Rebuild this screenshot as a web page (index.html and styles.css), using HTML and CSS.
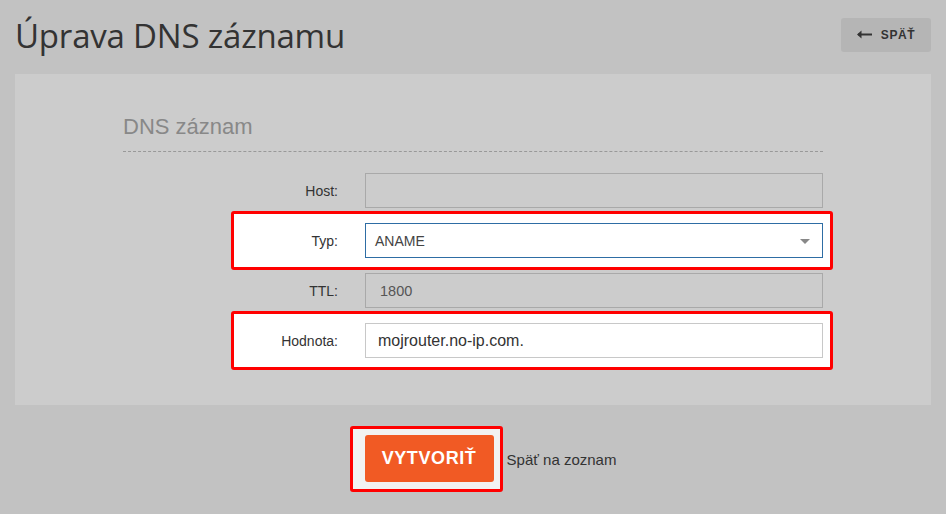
FILE: index.html
```html
<!DOCTYPE html>
<html lang="sk">
<head>
    <meta charset="UTF-8" />
    <meta name="viewport" content="width=device-width, initial-scale=1.0" />
    <title>Úprava DNS záznamu</title>
    <link rel="stylesheet" href="styles.css">
</head>
<body>
    <div class="page-header">
        <h1>Úprava DNS záznamu</h1>
        <a class="back-button" href="#">
            <svg class="arrow" width="15" height="9" viewBox="0 0 15 9" aria-hidden="true">
                <path d="M1 4.5 H15" stroke="#333" stroke-width="2" fill="none" />
                <path d="M0 4.5 L4.5 0.5 V8.5 Z" fill="#333" />
            </svg>
            SPÄŤ
        </a>
    </div>

    <div class="panel">
        <form class="record-form">
            <h2 class="legend">DNS záznam</h2>

            <div class="form-row">
                <label for="host">Host:</label>
                <input type="text" id="host" class="field disabled" value="" disabled />
            </div>

            <div class="form-row highlight">
                <label for="typ">Typ:</label>
                <div class="select-wrapper">
                    <div class="field select" id="typ">ANAME</div>
                    <span class="caret"></span>
                </div>
            </div>

            <div class="form-row">
                <label for="ttl">TTL:</label>
                <input type="text" id="ttl" class="field disabled ttl" value="1800" disabled />
            </div>

            <div class="form-row highlight">
                <label for="hodnota">Hodnota:</label>
                <input type="text" id="hodnota" class="field value" value="mojrouter.no-ip.com." />
            </div>
        </form>
    </div>

    <div class="actions">
        <div class="submit-box">
            <button class="submit-button">VYTVORIŤ</button>
        </div>
        <a class="back-link" href="#">Späť na zoznam</a>
    </div>
</body>
</html>
```

FILE: styles.css
```css
:root {
    --page-background: #c2c2c2;
    --panel-background: #cccccc;
    --text-color: #333333;
    --muted-color: #888888;
    --field-border: #a9a9a9;
    --focus-border: #2e6da4;
    --highlight: #ff0000;
    --accent: #f15a24;
}

body {
    margin: 0;
    background-color: var(--page-background);
    color: var(--text-color);
    font-family: "Liberation Sans", Arial, sans-serif;
    font-size: 14px;
}

.page-header {
    display: flex;
    justify-content: space-between;
    align-items: flex-start;
    padding: 0 15px;
    height: 74px;
}

h1 {
    margin: 13px 0 0 0;
    font-family: "Open Sans", sans-serif;
    font-weight: 400;
    font-size: 33px;
    line-height: 46px;
    color: #333333;
    letter-spacing: -0.2px;
}

.back-button {
    margin-top: 18px;
    width: 90px;
    height: 34px;
    display: flex;
    align-items: center;
    justify-content: center;
    gap: 9px;
    background-color: #b5b5b5;
    border-radius: 3px;
    color: #333333;
    text-decoration: none;
    font-weight: 700;
    font-size: 12px;
    letter-spacing: 0.6px;
}

.back-button .arrow {
    margin-top: -1px;
}

.panel {
    margin: 0 15px;
    background-color: var(--panel-background);
    padding: 38px 0 44px 0;
}

.record-form {
    width: 700px;
    margin-left: 108px;
}

.legend {
    margin: 0 0 9px 0;
    padding-bottom: 9px;
    font-size: 22px;
    font-weight: 400;
    line-height: 30px;
    color: var(--muted-color);
    border-bottom: 1px dashed #999999;
}

.form-row {
    display: flex;
    align-items: center;
    margin: 0 -10px -9px 108px;
    padding: 9px 7px 9px 0;
    border: 3px solid transparent;
    border-radius: 3px;
}

.form-row.highlight {
    border-color: var(--highlight);
    background-color: #ffffff;
    position: relative;
}

.form-row label {
    width: 104px;
    margin-right: 27px;
    text-align: right;
    color: #333333;
}

.field {
    box-sizing: border-box;
    width: 458px;
    height: 35px;
    margin: 0;
    padding: 6px 12px;
    border: 1px solid #c8c8c8;
    background-color: #ffffff;
    font-family: "Liberation Sans", Arial, sans-serif;
    font-size: 14px;
    color: #333333;
    outline: none;
}

.field.disabled {
    background-color: var(--panel-background);
    border-color: var(--field-border);
    color: #555555;
}

.field.ttl {
    padding-left: 14px;
    font-size: 14.5px;
}

.field.value {
    font-size: 16px;
}

.select-wrapper {
    position: relative;
}

.field.select {
    display: flex;
    align-items: center;
    padding-left: 9px;
    border-color: var(--focus-border);
    color: #444444;
}

.caret {
    position: absolute;
    right: 13px;
    top: 16px;
    width: 0;
    height: 0;
    border-left: 5px solid transparent;
    border-right: 5px solid transparent;
    border-top: 5px solid #888888;
}

.actions {
    display: flex;
    align-items: center;
    justify-content: center;
    margin-top: 21px;
    padding-left: 20px;
    gap: 4px;
}

.submit-box {
    padding: 6px 6px 7px 12px;
    border: 3px solid var(--highlight);
    border-radius: 3px;
    background-color: #f2f2f2;
}

.submit-button {
    display: block;
    width: 129px;
    height: 47px;
    background-color: var(--accent);
    color: #ffffff;
    border: none;
    border-radius: 3px;
    font-family: "Liberation Sans", Arial, sans-serif;
    font-size: 18px;
    font-weight: 700;
    letter-spacing: 0.6px;
    cursor: pointer;
}

.back-link {
    color: #333333;
    text-decoration: none;
    font-size: 15px;
}
```
